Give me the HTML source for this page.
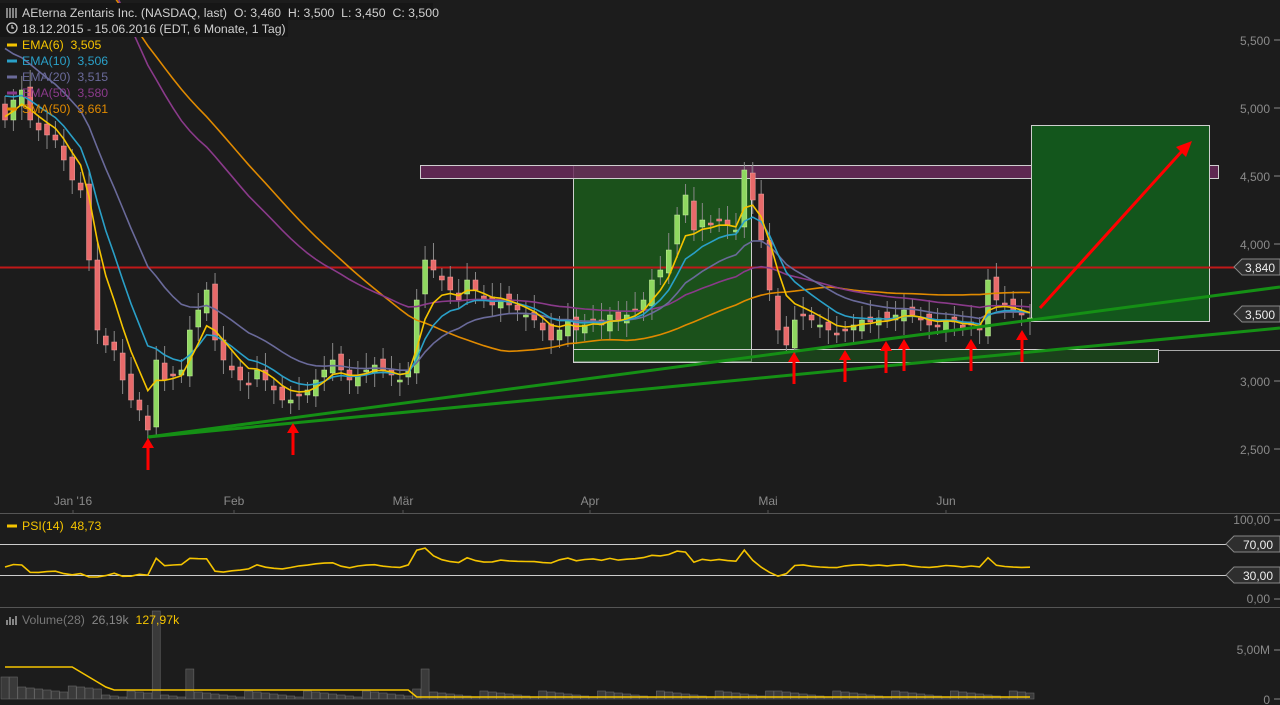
<!DOCTYPE html>
<html><head><meta charset="utf-8"><style>
html,body{margin:0;padding:0;background:#1c1c1c;overflow:hidden}
svg{display:block;font-family:"Liberation Sans",sans-serif}
text{white-space:pre}
</style></head><body>
<svg id="s" width="1280" height="705" viewBox="0 0 1280 705">
<rect width="1280" height="705" fill="#1c1c1c"/>
<line x1="0" y1="513.5" x2="1280" y2="513.5" stroke="#555"/>
<line x1="0" y1="607.5" x2="1280" y2="607.5" stroke="#555"/>
<rect x="573.5" y="165.5" width="178" height="196" fill="#1b5a1b" fill-opacity="0.85" stroke="#cfcfcf"/>
<rect x="420.5" y="165.5" width="798" height="13" fill="#6a2a5a" fill-opacity="0.85" stroke="#cfcfcf"/>
<rect x="573.5" y="349.5" width="585" height="13" fill="#1b5a1b" fill-opacity="0.6" stroke="#cfcfcf"/>
<rect x="1031.5" y="125.5" width="178" height="196" fill="#13561c" stroke="#cfcfcf"/>
<line x1="1158" y1="350.5" x2="1280" y2="350.5" stroke="#aaa"/>
<line x1="0" y1="267.5" x2="1235" y2="267.5" stroke="#c01818" stroke-width="2"/>
<g id="cand"></g>
<g id="ma" fill="none" stroke-width="1.6"></g>
<line x1="148" y1="437" x2="1280" y2="287" stroke="#159015" stroke-width="3"/>
<line x1="148" y1="437" x2="1280" y2="328" stroke="#159015" stroke-width="3"/>
<g fill="#f00" stroke="#f00" stroke-width="3" id="arr"></g>
<line x1="1040" y1="308" x2="1183" y2="150" stroke="#f00" stroke-width="3"/>
<polygon points="1192,141 1176,147 1186,157" fill="#f00"/>
<g fill="#8a8a8a" font-size="12" text-anchor="end">
<text x="1270" y="45">5,500</text><text x="1270" y="113">5,000</text><text x="1270" y="181">4,500</text>
<text x="1270" y="249">4,000</text><text x="1270" y="386">3,000</text><text x="1270" y="454">2,500</text>
<text x="1270" y="524">100,00</text><text x="1270" y="603">0,00</text>
<text x="1270" y="654">5,00M</text><text x="1270" y="704">0</text>
</g>
<g stroke="#8a8a8a"><line x1="1274" y1="40" x2="1280" y2="40"/><line x1="1274" y1="108" x2="1280" y2="108"/><line x1="1274" y1="176" x2="1280" y2="176"/><line x1="1274" y1="244" x2="1280" y2="244"/><line x1="1274" y1="381" x2="1280" y2="381"/><line x1="1274" y1="449" x2="1280" y2="449"/><line x1="1274" y1="520" x2="1280" y2="520"/><line x1="1274" y1="599" x2="1280" y2="599"/><line x1="1274" y1="650" x2="1280" y2="650"/><line x1="1274" y1="699" x2="1280" y2="699"/></g>
<g fill="#8a8a8a" font-size="12" text-anchor="middle">
<text x="73" y="505">Jan '16</text><text x="234" y="505">Feb</text><text x="403" y="505">Mär</text>
<text x="590" y="505">Apr</text><text x="768" y="505">Mai</text><text x="946" y="505">Jun</text>
</g>
<g stroke="#555"><line x1="73" y1="510" x2="73" y2="513"/><line x1="234" y1="510" x2="234" y2="513"/><line x1="403" y1="510" x2="403" y2="513"/><line x1="590" y1="510" x2="590" y2="513"/><line x1="768" y1="510" x2="768" y2="513"/><line x1="946" y1="510" x2="946" y2="513"/></g>
<polygon points="1234,267 1242,259 1280,259 1280,275 1242,275" fill="#2e2e2e" stroke="#888"/>
<text x="1275" y="272" fill="#eee" font-size="12" text-anchor="end">3,840</text>
<polygon points="1234,314 1242,306 1280,306 1280,322 1242,322" fill="#2e2e2e" stroke="#888"/>
<text x="1275" y="319" fill="#eee" font-size="12" text-anchor="end">3,500</text>
<line x1="0" y1="544.5" x2="1228" y2="544.5" stroke="#ccc"/>
<line x1="0" y1="575.5" x2="1228" y2="575.5" stroke="#ccc"/>
<polygon points="1226,544 1234,536 1280,536 1280,552 1234,552" fill="#2e2e2e" stroke="#888"/>
<text x="1273" y="549" fill="#eee" font-size="12" text-anchor="end">70,00</text>
<polygon points="1226,575 1234,567 1280,567 1280,583 1234,583" fill="#2e2e2e" stroke="#888"/>
<text x="1273" y="580" fill="#eee" font-size="12" text-anchor="end">30,00</text>
<polyline id="rsi" fill="none" stroke="#f5c400" stroke-width="1.6"/>
<g id="vol" fill="#3a3a3a" stroke="#666" stroke-width="0.6"></g>
<polyline id="vma" fill="none" stroke="#f5c400" stroke-width="1.6"/>
<rect x="0" y="3" width="433" height="17" fill="#161616"/>
<rect x="0" y="20" width="288" height="17" fill="#161616"/>
<g font-size="12.3">
<text x="22" y="17" fill="#d0d0d0">AEterna Zentaris Inc. (NASDAQ, last)  O: 3,460  H: 3,500  L: 3,450  C: 3,500</text>
<text x="22" y="33" fill="#d0d0d0">18.12.2015 - 15.06.2016 (EDT, 6 Monate, 1 Tag)</text>
<text x="22" y="49" fill="#f5c400">EMA(6)  3,505</text>
<text x="22" y="65" fill="#2aa0c8">EMA(10)  3,506</text>
<text x="22" y="81" fill="#6a6a9a">EMA(20)  3,515</text>
<text x="22" y="97" fill="#8a3a8a">EMA(50)  3,580</text>
<text x="22" y="113" fill="#e08a00">SMA(50)  3,661</text>
<text x="22" y="530" fill="#f5c400">PSI(14)  48,73</text>
<text x="22" y="624" fill="#777">Volume(28)  <tspan fill="#888">26,19k</tspan>  <tspan fill="#f5c400">127,97k</tspan></text>
</g>
<g stroke-width="3"><line x1="7" y1="45" x2="17" y2="45" stroke="#f5c400"/><line x1="7" y1="61" x2="17" y2="61" stroke="#2aa0c8"/><line x1="7" y1="77" x2="17" y2="77" stroke="#6a6a9a"/><line x1="7" y1="93" x2="17" y2="93" stroke="#8a3a8a"/><line x1="7" y1="109" x2="17" y2="109" stroke="#e08a00"/><line x1="7" y1="526" x2="17" y2="526" stroke="#f5c400"/></g>
<g stroke="#ccc" fill="none" stroke-width="1.2"><circle cx="12" cy="28" r="5"/><path d="M12 25v3h2"/><path d="M7 8v10M10 8v10M13 8v10M16 8v10"/><path d="M7 620v5M10 617v8M13 619v6M16 616v9"/></g>
</svg>
<script>
var ys=[120,100,90,120,130,135,140,160,180,190,260,330,345,350,380,400,410,430,360,380,375,370,330,310,290,340,360,370,380,385,370,380,390,400,400,395,390,380,370,360,370,380,375,370,365,370,375,380,370,300,260,270,280,290,300,280,290,300,305,300,305,310,315,320,330,340,330,320,330,325,320,325,315,320,315,310,300,280,270,250,215,195,230,220,225,220,225,230,170,200,240,290,330,345,320,315,320,325,330,335,330,325,320,322,318,320,315,310,315,320,325,325,320,322,328,325,330,280,300,305,310,315,318];
var N=ys.length,dx=(1030-5)/(N-1),ns="http://www.w3.org/2000/svg";
function el(t,a,p){var e=document.createElementNS(ns,t);for(var k in a)e.setAttribute(k,a[k]);document.getElementById(p).appendChild(e);return e;}
var prev=110;
for(var i=0;i<N;i++){var x=5+i*dx,c=ys[i],o=prev+((i*7)%5-2)*3;var up=c<o;var t=Math.min(o,c),b=Math.max(o,c);if(b-t<2)b=t+2;
el("line",{x1:x,y1:t-8-(i%4)*3,x2:x,y2:b+8+(i%3)*3,stroke:"#888","stroke-width":1},"cand");
el("rect",{x:x-2.5,y:t,width:5,height:b-t,fill:up?"#8fd860":"#e86a6a",stroke:up?"#c8f0a0":"#f0a0a0","stroke-width":0.5},"cand");prev=c;}
function ema(p,seed,col){var v=seed,k=2/(p+1),pts=[];for(var i=0;i<N;i++){v=v+k*(ys[i]-v);pts.push((5+i*dx).toFixed(1)+","+v.toFixed(1));}el("polyline",{points:pts.join(" "),stroke:col},"ma");}
// SMA50 with pre-history
(function(){var hist=[];for(var j=0;j<50;j++)hist.push(-330+j*8);var all=hist.concat(ys),pts=[];for(var i=0;i<N;i++){var s=0;for(var j=i+1;j<=i+50;j++)s+=all[j];pts.push((5+i*dx).toFixed(1)+","+(s/50).toFixed(1));}el("polyline",{points:pts.join(" "),stroke:"#e08a00"},"ma");})();
ema(40,-230,"#8a3a8a");ema(18,40,"#6a6a9a");ema(9,90,"#2aa0c8");ema(5,115,"#f5c400");
var rp=[],r=565;for(var i=0;i<N;i++){var d=i>0?ys[i-1]-ys[i]:0;var tgt=566-d*0.35;if(i>48&&i<92)tgt-=6;if(i<18)tgt+=3;r=r*0.5+tgt*0.5;if(r<544)r=544;if(r>577)r=577;rp.push((5+i*dx).toFixed(1)+","+r.toFixed(1));}
document.getElementById("rsi").setAttribute("points",rp.join(" "));
var vp=[];for(var i=0;i<N;i++){var x=5+i*dx,h=(i*13%7)+2;if(i<2)h=22;else if(i<12)h+=5;if(i==18)h=88;if(i==22)h=30;if(i==50)h=30;if(i==49)h=10;if(i==91)h=8;
el("rect",{x:x-4,y:699-h,width:8,height:h},"vol");var m=i<9?667:(i<13?667+(i-8)*5:(i<49?690:697));vp.push(x.toFixed(1)+","+m);}
document.getElementById("vma").setAttribute("points",vp.join(" "));
[148,293,794,845,886,904,971,1022].forEach(function(x,j){var y=[438,423,352,350,341,339,339,330][j];el("line",{x1:x,y1:y+8,x2:x,y2:y+32},"arr");el("polygon",{points:(x-6)+","+(y+10)+" "+x+","+y+" "+(x+6)+","+(y+10),"stroke-width":0},"arr");});
</script>
</body></html>
